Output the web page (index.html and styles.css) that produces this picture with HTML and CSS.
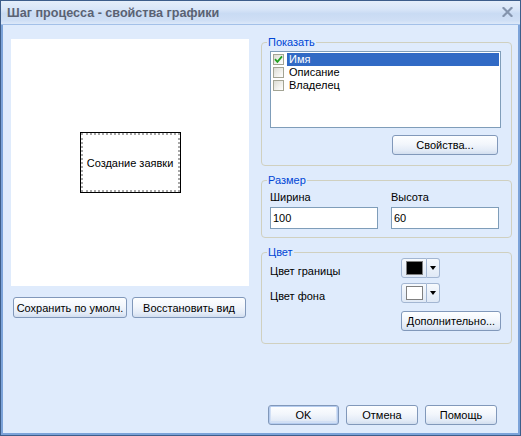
FILE: index.html
```html
<!DOCTYPE html>
<html lang="ru">
<head>
<meta charset="utf-8">
<title>Шаг процесса - свойства графики</title>
<link rel="stylesheet" href="styles.css">
</head>
<body>
<div class="window">
  <div class="titlebar">
    <span class="title">Шаг процесса - свойства графики</span>
    <span class="close">
      <svg width="11" height="10" viewBox="0 0 11 10">
        <path d="M1.5 1 L9.5 9 M9.5 1 L1.5 9" stroke="#8494ad" stroke-width="2.2" stroke-linecap="square"/>
      </svg>
    </span>
  </div>
  <div class="body">
    <div class="main">
      <div class="left">
        <div class="preview">
          <div class="node"><div class="node-inner">Создание заявки</div></div>
        </div>
        <div class="left-buttons">
          <button class="btn btn-save">Сохранить по умолч.</button>
          <button class="btn btn-restore">Восстановить вид</button>
        </div>
      </div>
      <div class="right">
        <fieldset class="group group-show">
          <legend>Показать</legend>
          <div class="listbox">
            <div class="item selected">
              <span class="cb">
                <svg width="9" height="9" viewBox="0 0 9 9"><path d="M1 4.2 L3.4 6.8 L8 1.4" fill="none" stroke="#21a121" stroke-width="1.8"/></svg>
              </span>
              <span class="item-label">Имя</span>
            </div>
            <div class="item"><span class="cb"></span><span class="item-label">Описание</span></div>
            <div class="item"><span class="cb"></span><span class="item-label">Владелец</span></div>
          </div>
          <div class="row-end"><button class="btn btn-props">Свойства...</button></div>
        </fieldset>
        <fieldset class="group group-size">
          <legend>Размер</legend>
          <div class="size-grid">
            <span class="field-label">Ширина</span>
            <span class="field-label">Высота</span>
            <input class="text-input" type="text" value="100">
            <input class="text-input" type="text" value="60">
          </div>
        </fieldset>
        <fieldset class="group group-color">
          <legend>Цвет</legend>
          <div class="color-grid">
            <span class="field-label color-label">Цвет границы</span>
            <span class="colorpick">
              <span class="swatch-btn"><span class="swatch swatch-black"></span></span>
              <span class="arrow-btn"><span class="arrow"></span></span>
            </span>
            <span class="field-label color-label">Цвет фона</span>
            <span class="colorpick">
              <span class="swatch-btn"><span class="swatch swatch-white"></span></span>
              <span class="arrow-btn"><span class="arrow"></span></span>
            </span>
          </div>
          <div class="more-row"><button class="btn btn-more">Дополнительно...</button></div>
        </fieldset>
      </div>
    </div>
    <div class="footer">
      <button class="btn btn-ok">OK</button>
      <button class="btn btn-cancel">Отмена</button>
      <button class="btn btn-help">Помощь</button>
    </div>
  </div>
</div>
</body>
</html>
```
FILE: styles.css
```css
html, body {
  margin: 0;
  padding: 0;
  background: #dfebfc;
}
* { box-sizing: border-box; }

.window {
  width: 521px;
  height: 436px;
  border: 1px solid #3d5d8a;
  display: flex;
  flex-direction: column;
  font-family: "Liberation Sans", Arial, sans-serif;
  font-size: 11px;
  color: #000;
  background: #dfebfc;
}

.titlebar {
  height: 24px;
  flex: none;
  display: flex;
  align-items: center;
  justify-content: space-between;
  padding: 0 7px 0 6px;
  background: linear-gradient(#e5eefa 0%, #d9e6f8 35%, #c9dbf3 55%, #cfdff5 85%, #dce8f9 100%);
  border-bottom: 1px solid #a3c0e8;
}
.title {
  font-weight: bold;
  font-size: 12.6px;
  color: #5a6273;
  margin-top: 1px;
}
.close {
  display: flex;
  margin-top: -2px;
}

.body {
  flex: 1;
  display: flex;
  flex-direction: column;
  border: 2px solid #7ca3d9;
  border-top: 0;
  padding: 0 0 8px 0;
}

.main {
  display: flex;
  align-items: flex-start;
  padding-left: 8px;
  gap: 12px;
}

.left {
  margin-top: 14px;
  width: 238px;
  display: flex;
  flex-direction: column;
}
.preview {
  height: 247px;
  background: #fff;
  display: flex;
  align-items: center;
  justify-content: center;
}
.node {
  width: 101px;
  height: 61px;
  border: 1px solid #000;
  background: #fff;
}
.node-inner {
  height: 100%;
  border: 2px dotted #a8a8a8;
  display: flex;
  align-items: center;
  justify-content: center;
  padding-top: 1px;
  white-space: nowrap;
}

.left-buttons {
  display: flex;
  gap: 5px;
  margin-top: 11px;
  padding-left: 2px;
}

.btn {
  font-family: "Liberation Sans", Arial, sans-serif;
  font-size: 11px;
  color: #000;
  height: 21px;
  padding: 0;
  border: 1px solid #8198ba;
  border-radius: 3px;
  background: linear-gradient(#fdfeff 0%, #f2f6fc 45%, #e3ebf7 80%, #d2deef 100%);
  white-space: nowrap;
}
.btn-save, .btn-restore { width: 114px; }

.right {
  margin-top: 11px;
  width: 251px;
  display: flex;
  flex-direction: column;
  gap: 8px;
}

.group {
  margin: 0;
  border: 1px solid #d0d0bf;
  border-radius: 4px;
  padding: 0 10px 0 8px;
  min-width: 0;
}
.group legend {
  color: #0046d5;
  line-height: 13px;
  padding: 0 1px;
  margin-left: -3px;
}

.group-show { padding-top: 2px; padding-bottom: 10px; }
.listbox {
  height: 77px;
  border: 1px solid #7f9db9;
  background: #fff;
  padding: 1px 1px 0 2px;
}
.item {
  height: 13px;
  display: flex;
  align-items: center;
}
.cb {
  width: 11px;
  height: 11px;
  flex: none;
  border: 1px solid #a3a494;
  background: linear-gradient(135deg, #dcdcd4 0%, #f2f2ee 60%, #ffffff 100%);
  display: flex;
  align-items: center;
  justify-content: center;
}
.item-label {
  margin-left: 3px;
  padding-left: 2px;
  line-height: 13px;
  flex: 1;
}
.item.selected .item-label {
  background: #316ac5;
  color: #fff;
}
.row-end {
  display: flex;
  justify-content: flex-end;
  margin-top: 7px;
  padding-right: 3px;
}
.btn-props { width: 106px; height: 20px; }

.group-size { padding-top: 4px; padding-bottom: 8px; }
.size-grid {
  display: grid;
  grid-template-columns: 108px 108px;
  column-gap: 13px;
  row-gap: 3px;
}
.field-label { line-height: 13px; }
.text-input {
  width: 108px;
  height: 22px;
  border: 1px solid #7f9db9;
  background: #fff;
  font-family: "Liberation Sans", Arial, sans-serif;
  font-size: 11px;
  padding: 0 0 0 2px;
  margin: 0;
  outline: none;
}

.group-color { padding-top: 0; padding-bottom: 12px; }
.color-grid {
  margin-top: -1px;
  display: grid;
  grid-template-columns: 131px auto;
  grid-auto-rows: 20px;
  row-gap: 5px;
}
.color-label { align-self: end; }
.colorpick {
  display: flex;
  width: 39px;
  height: 20px;
}
.swatch-btn {
  width: 26px;
  height: 20px;
  border: 1px solid #a3b6d2;
  border-radius: 3px 0 0 3px;
  background: linear-gradient(#f6f9fd, #e0e9f6);
  display: flex;
  align-items: center;
  justify-content: center;
}
.swatch {
  width: 17px;
  height: 14px;
  border: 1px solid #808080;
}
.swatch-black { background: #000; }
.swatch-white { background: #fff; }
.arrow-btn {
  width: 13px;
  height: 20px;
  border: 1px solid #a3b6d2;
  border-left: 0;
  border-radius: 0 3px 3px 0;
  background: linear-gradient(#f6f9fd, #e0e9f6);
  display: flex;
  align-items: center;
  justify-content: center;
}
.arrow {
  width: 0;
  height: 0;
  border-left: 3.5px solid transparent;
  border-right: 3.5px solid transparent;
  border-top: 4px solid #000;
  margin-top: -1px;
}
.more-row {
  margin-top: 8px;
  padding-left: 131px;
}
.btn-more { width: 100px; height: 20px; }

.footer {
  margin-top: auto;
  display: flex;
  justify-content: flex-end;
  gap: 7px;
  padding-right: 21px;
}
.btn-ok { width: 71px; height: 20px; box-shadow: inset 0 0 0 1px #b5ccef, inset 0 -1px 0 2px #d2e0f5; }
.btn-cancel, .btn-help { width: 72px; height: 20px; }
```
